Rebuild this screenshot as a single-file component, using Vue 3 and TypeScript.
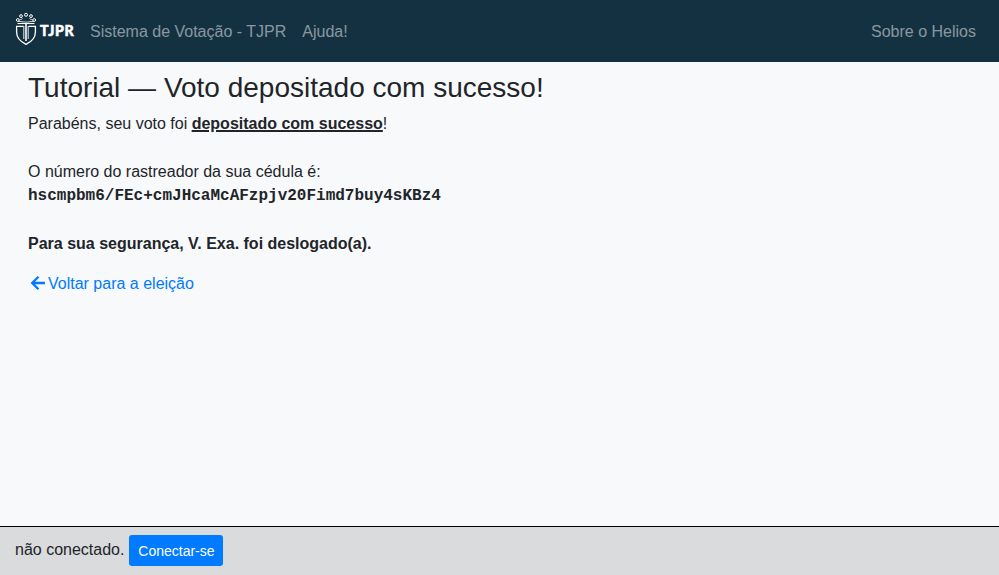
<script setup lang="ts">
const tracker: string = 'hscmpbm6/FEc+cmJHcaMcAFzpjv20Fimd7buy4sKBz4'
</script>

<template>
  <div class="page">
    <nav class="navbar">
      <a class="brand">
        <svg class="crest" width="22" height="34" viewBox="0 0 22 34" fill="none" stroke="#fff">
          <path d="M8.5 14.4H1.6V20C1.6 26.5 6 30 11 32.3C16 30 20.4 26.5 20.4 20V14.4H13.5" stroke-width="1.3" />
          <path d="M3 9.3Q11 11 19 9.3" stroke-width=".8" />
          <path d="M2.5 11.5H19.5" stroke-width="1.1" />
          <path d="M8.8 14V27M13.2 14V27" stroke-width=".9" />
          <path d="M11 12V29" stroke-width="1.6" />
          <circle cx="11" cy="2.8" r="1.5" />
          <circle cx="6" cy="4.1" r="1.4" />
          <circle cx="16" cy="4.1" r="1.4" />
          <circle cx="2.8" cy="8" r="1.4" />
          <circle cx="19.2" cy="8" r="1.4" />
          <path d="M4.5 7.5H6.5L7.5 6M17.5 7.5H15.5L14.5 6" stroke-width=".6" />
        </svg>
        <span class="name">TJPR</span>
      </a>
      <a class="link">Sistema de Votação - TJPR</a>
      <a class="link">Ajuda!</a>
      <a class="link about">Sobre o Helios</a>
    </nav>
    <main class="content">
      <h3>Tutorial — Voto depositado com sucesso!</h3>
      <p>Parabéns, seu voto foi <b><u>depositado com sucesso</u></b>!<br /><br />O número do rastreador da sua cédula é:<br /><b class="code">{{ tracker }}</b><br /><br /><b>Para sua segurança, V. Exa. foi deslogado(a).</b></p>
      <a class="back">
        <svg class="arrow" width="20" height="20" viewBox="0 0 20 20" fill="none" stroke="currentColor" stroke-width="2.3"><path d="M17 10H4.5M10.5 3.7L4.2 10L10.5 16.3" /></svg>
        <span>Voltar para a eleição</span>
      </a>
    </main>
    <footer class="footer"><span>não conectado.</span><button>Conectar-se</button></footer>
  </div>
</template>

<style>
body { margin: 0; }
</style>
<style scoped>
.page { height: 100vh; display: flex; flex-direction: column; box-sizing: border-box; background: #f8f9fb; color: #212529; font: 16px/24px "Liberation Sans", Arial, sans-serif; }
.navbar { height: 62px; display: flex; align-items: center; padding: 1px 15px 0; box-sizing: border-box; background: #133141; color: rgba(255,255,255,.5); }
.brand { display: flex; align-items: center; width: 67px; color: #fff; }
.crest { flex: none; margin-bottom: 5px; }
.name { font: 900 14.2px/20px Lato, sans-serif; letter-spacing: .6px; -webkit-text-stroke: .5px #fff; margin: 0 0 2px 3px; }
.link { padding: 0 8px; }
.about { margin-left: auto; }
.content { flex: 1; padding: 9px 28px; }
h3 { margin: 0 0 7px; font-size: 28px; font-weight: 500; line-height: 33.6px; }
p { margin: 0 0 16px; }
u { text-decoration-thickness: 2px; }
.code { font-family: "Liberation Mono", monospace; line-height: 1; vertical-align: 1px; }
.back { display: flex; align-items: center; color: #007bff; }
.arrow { margin-bottom: 2px; }
.footer { height: 49px; display: flex; align-items: center; gap: 5px; padding: 0 15px 2px; box-sizing: border-box; border-top: 1px solid #000; background: #dadbdc; }
button { width: 94px; height: 31px; padding: 4px 0 3px; border: 0; border-radius: 3px; background: #007bff; color: #fff; font: 14px/21px "Liberation Sans", Arial, sans-serif; margin-top: 1px; }
</style>
